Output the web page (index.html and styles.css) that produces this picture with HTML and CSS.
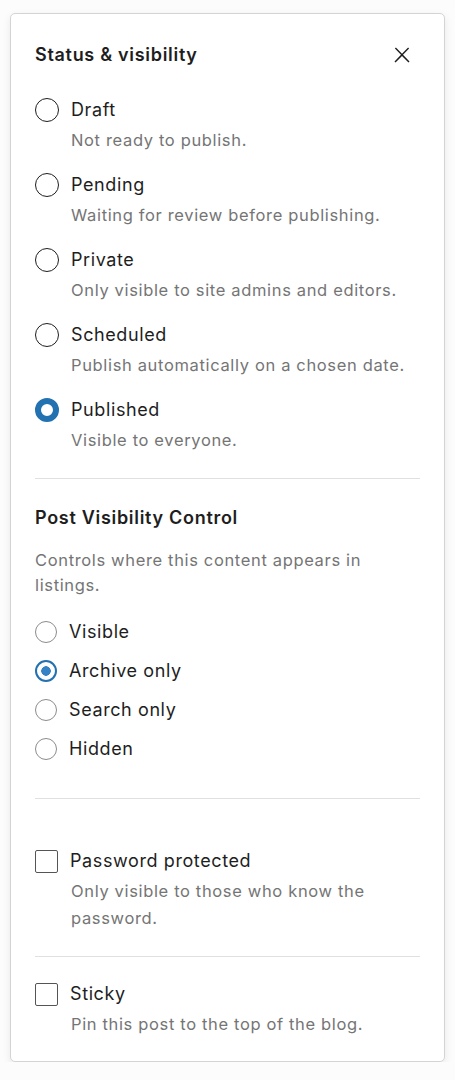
FILE: index.html
```html
<!DOCTYPE html>
<html lang="en">
<head>
<meta charset="utf-8">
<title>Status &amp; visibility</title>
<link rel="stylesheet" href="styles.css">
</head>
<body>
<div class="card">
  <div class="header">
    <h2 class="title">Status &amp; visibility</h2>
    <button class="close" aria-label="Close">
      <svg viewBox="0 0 24 24" width="24" height="24"><path d="M13 11.8l6.1-6.3-1-1-6.1 6.2-6.1-6.2-1 1 6.1 6.3-6.5 6.7 1 1 6.5-6.6 6.5 6.6 1-1z"/></svg>
    </button>
  </div>

  <div class="status-list">
    <div class="option">
      <div class="opt-row"><span class="radio-lg"></span><span class="opt-label">Draft</span></div>
      <div class="opt-desc">Not ready to publish.</div>
    </div>
    <div class="option">
      <div class="opt-row"><span class="radio-lg"></span><span class="opt-label">Pending</span></div>
      <div class="opt-desc">Waiting for review before publishing.</div>
    </div>
    <div class="option">
      <div class="opt-row"><span class="radio-lg"></span><span class="opt-label">Private</span></div>
      <div class="opt-desc">Only visible to site admins and editors.</div>
    </div>
    <div class="option">
      <div class="opt-row"><span class="radio-lg"></span><span class="opt-label">Scheduled</span></div>
      <div class="opt-desc">Publish automatically on a chosen date.</div>
    </div>
    <div class="option">
      <div class="opt-row"><span class="radio-lg checked"></span><span class="opt-label">Published</span></div>
      <div class="opt-desc">Visible to everyone.</div>
    </div>
  </div>

  <hr class="sep sep-1">

  <h3 class="subtitle">Post Visibility Control</h3>
  <p class="help">Controls where this content appears in listings.</p>
  <div class="vis-list">
    <div class="vis-row"><span class="radio-sm"></span><span class="opt-label">Visible</span></div>
    <div class="vis-row"><span class="radio-sm checked"></span><span class="opt-label">Archive only</span></div>
    <div class="vis-row"><span class="radio-sm"></span><span class="opt-label">Search only</span></div>
    <div class="vis-row"><span class="radio-sm"></span><span class="opt-label">Hidden</span></div>
  </div>

  <hr class="sep sep-2">

  <div class="option check-opt first-check">
    <div class="opt-row"><span class="checkbox"></span><span class="opt-label">Password protected</span></div>
    <div class="opt-desc">Only visible to those who know the password.</div>
  </div>

  <hr class="sep sep-3">

  <div class="option check-opt">
    <div class="opt-row"><span class="checkbox"></span><span class="opt-label">Sticky</span></div>
    <div class="opt-desc">Pin this post to the top of the blog.</div>
  </div>
</div>
</body>
</html>
```

FILE: styles.css
```css
* { box-sizing: border-box; }

body {
  margin: 0;
  background: #fcfcfc;
  font-family: Inter, "Noto Sans", "Liberation Sans", sans-serif;
  color: #1e1e1e;
}

.card {
  margin: 13px 0 0 10px;
  width: 435px;
  background: #fff;
  border: 1px solid #d4d4d4;
  border-radius: 5px;
  box-shadow: 0 3px 8px rgba(0, 0, 0, 0.08);
  padding: 29px 24px 23px 24px;
}

.header {
  display: flex;
  align-items: center;
  justify-content: space-between;
  height: 24px;
}

.title {
  margin: 0;
  font-size: 18px;
  font-weight: 600;
  letter-spacing: 0.7px;
  line-height: 24px;
}

.close {
  border: 0;
  background: none;
  padding: 0;
  margin-right: 6px;
  width: 24px;
  height: 24px;
  display: flex;
}
.close svg { fill: #1e1e1e; }

.status-list {
  margin-top: 31px;
  display: flex;
  flex-direction: column;
  gap: 19px;
}

.opt-row {
  display: flex;
  align-items: center;
  height: 24px;
  gap: 12px;
}

.opt-label {
  font-size: 18px;
  line-height: 24px;
  letter-spacing: 0.6px;
  color: #1e1e1e;
}

.opt-desc {
  margin-top: 5px;
  padding-left: 36px;
  font-size: 16.5px;
  line-height: 27px;
  letter-spacing: 0.65px;
  color: #757575;
}

.radio-lg {
  width: 24px;
  height: 24px;
  border-radius: 50%;
  border: 1.5px solid #1e1e1e;
  flex: none;
}
.radio-lg.checked {
  border: 6.5px solid #2271b1;
}

.sep {
  border: 0;
  border-top: 1px solid #e0e0e0;
  margin: 0;
}
.sep-1 { margin-top: 24px; }
.sep-2 { margin-top: 30px; }
.sep-3 { margin-top: 24px; }

.subtitle {
  margin: 27px 0 0;
  font-size: 18px;
  font-weight: 600;
  letter-spacing: 0.7px;
  line-height: 24px;
}

.help {
  margin: 18px 0 0;
  font-size: 16.5px;
  line-height: 25px;
  letter-spacing: 0.65px;
  color: #757575;
}

.vis-list {
  margin-top: 14px;
  display: flex;
  flex-direction: column;
}

.vis-row {
  display: flex;
  align-items: center;
  height: 39px;
  gap: 12px;
}

.radio-sm {
  width: 22px;
  height: 22px;
  border-radius: 50%;
  border: 1.5px solid #8c8c8c;
  flex: none;
  background: #fff;
}
.radio-sm.checked {
  border: 2.5px solid #2271b1;
  background: radial-gradient(circle, #3582c4 0 4.5px, #fff 5px);
}

.checkbox {
  width: 23px;
  height: 23px;
  border: 1.5px solid #555;
  border-radius: 2px;
  flex: none;
}

.first-check { margin-top: 50px; }
.sep-3 + .check-opt { margin-top: 25px; }
```
